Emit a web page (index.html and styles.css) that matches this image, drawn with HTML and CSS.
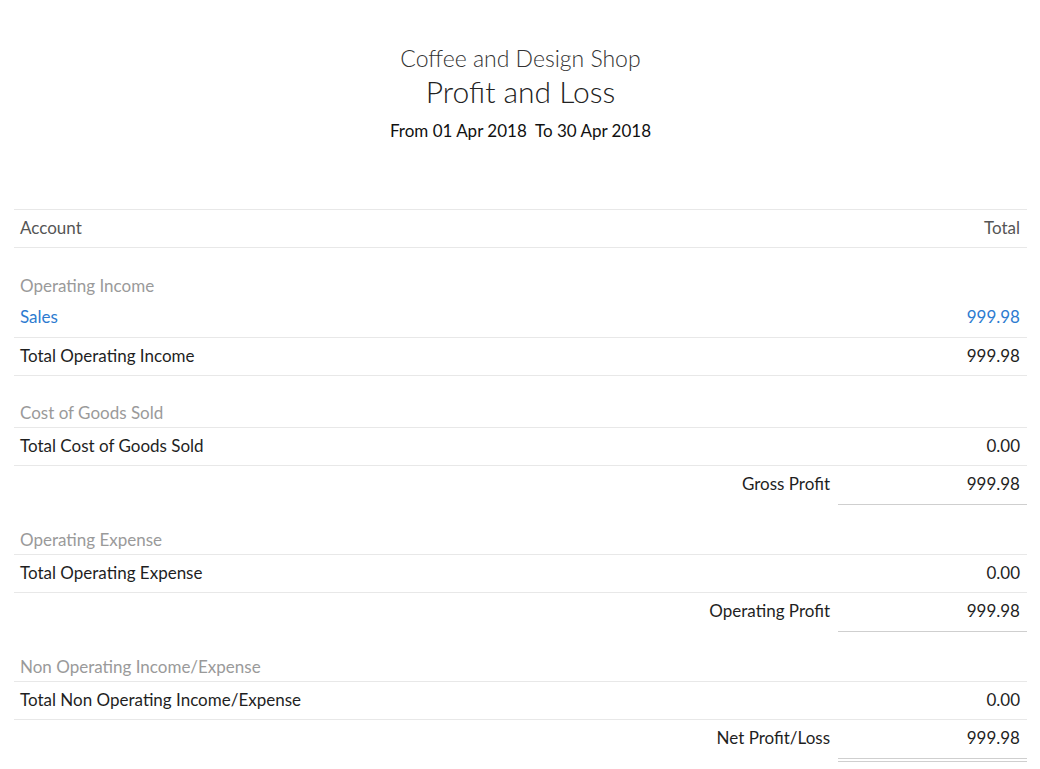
FILE: index.html
```html
<!DOCTYPE html>
<html>
<head>
<meta charset="utf-8">
<link rel="stylesheet" href="styles.css">
</head>
<body>
<div class="page">
  <header class="title">
    <div class="org">Coffee and Design Shop</div>
    <div class="report">Profit and Loss</div>
    <div class="period">From 01 Apr 2018&nbsp; To 30 Apr 2018</div>
  </header>
  <div class="report-table">
    <div class="row head"><span>Account</span><span>Total</span></div>
    <div class="row section first"><span>Operating Income</span></div>
    <div class="row item"><span class="link">Sales</span><span class="link">999.98</span></div>
    <div class="row total"><span>Total Operating Income</span><span>999.98</span></div>
    <div class="row section"><span>Cost of Goods Sold</span></div>
    <div class="row total"><span>Total Cost of Goods Sold</span><span>0.00</span></div>
    <div class="row summary"><span class="label">Gross Profit</span><span class="amount">999.98</span></div>
    <div class="row section after-summary"><span>Operating Expense</span></div>
    <div class="row total"><span>Total Operating Expense</span><span>0.00</span></div>
    <div class="row summary"><span class="label">Operating Profit</span><span class="amount">999.98</span></div>
    <div class="row section after-summary"><span>Non Operating Income/Expense</span></div>
    <div class="row total"><span>Total Non Operating Income/Expense</span><span>0.00</span></div>
    <div class="row summary final"><span class="label">Net Profit/Loss</span><span class="amount">999.98</span></div>
  </div>
</div>
</body>
</html>
```

FILE: styles.css
```css
html, body {
  margin: 0;
  padding: 0;
  background: #fff;
}
body {
  font-family: Lato, "Open Sans", "Liberation Sans", sans-serif;
  color: #1f1f1f;
  font-size: 17px;
}
.page {
  padding: 44px 13px 0 14px;
}
.title {
  text-align: center;
  height: 165px;
}
.org {
  font-size: 23px;
  line-height: 29px;
  color: #333;
  font-weight: 300;
}
.report {
  font-size: 30px;
  line-height: 36px;
  color: #222;
  font-weight: 300;
}
.period {
  font-size: 17px;
  line-height: 24px;
  margin-top: 10px;
  color: #111;
}
.report-table {
  border-top: 1px solid #e8e8e8;
}
.row {
  display: flex;
  justify-content: space-between;
  line-height: 20px;
  padding: 0 7px 0 6px;
}
.row.head {
  color: #555;
  padding-top: 8px;
  padding-bottom: 9px;
  border-bottom: 1px solid #e8e8e8;
}
.row.section {
  color: #9a9a9a;
  padding-top: 28px;
  padding-bottom: 4px;
}
.row.item {
  padding-top: 7px;
  padding-bottom: 10px;
}
.link {
  color: #2d7bd0;
}
.row.total {
  padding-top: 8px;
  padding-bottom: 9px;
  border-top: 1px solid #e8e8e8;
  border-bottom: 1px solid #e8e8e8;
}
.row.total + .row.section {
  padding-top: 27px;
}
.row.section.after-summary {
  padding-top: 25px;
}
.row.summary {
  justify-content: flex-end;
  padding: 0;
}
.summary .label {
  padding: 8px 8px 10px 0;
}
.summary .amount {
  width: 189px;
  box-sizing: border-box;
  text-align: right;
  padding: 8px 7px 10px 0;
  border-bottom: 1px solid #cfcfcf;
}
.summary.final .amount {
  border-bottom: 4px double #cfcfcf;
}
```
